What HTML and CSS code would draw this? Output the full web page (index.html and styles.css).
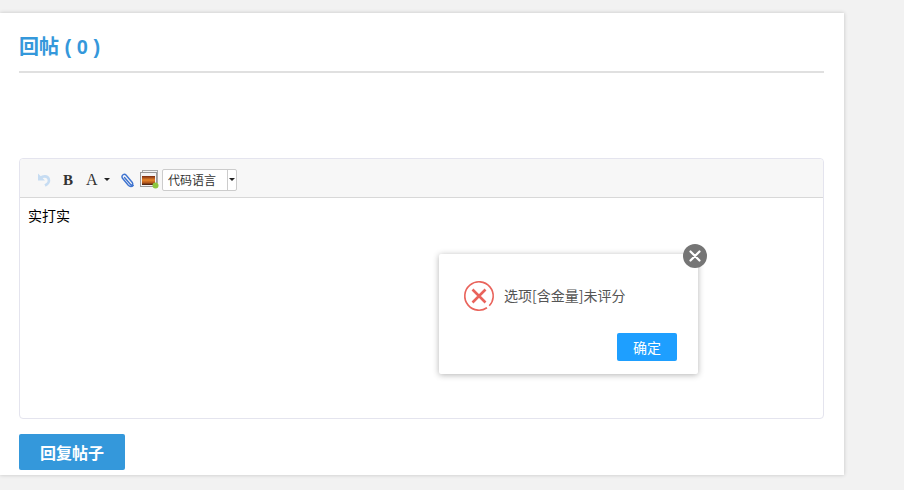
FILE: index.html
```html
<!DOCTYPE html>
<html lang="zh-CN">
<head>
<meta charset="utf-8">
<title>回帖</title>
<link rel="stylesheet" href="styles.css">
</head>
<body>
<main class="card">
  <h2 class="title">回帖 ( 0 )</h2>
  <section class="editor">
    <div class="toolbar">
      <svg class="ic ic-undo" width="16" height="16" viewBox="0 0 16 16"><path d="M2 1.500v7h7z" fill="#c6dcf2"/><path d="M4.500 6c2.500-2.300 7-2.300 8.200 1 .8 2.500-.8 5-3.700 6.500" fill="none" stroke="#c6dcf2" stroke-width="2.600"/></svg>
      <span class="glyph glyph-b">B</span>
      <span class="glyph glyph-a">A</span>
      <span class="caret"></span>
      <svg class="ic ic-clip" width="16" height="16" viewBox="0 0 16 16"><path d="M5.500 5.500l6 7c1.300 1.500 3-.4 1.800-2L7 3C5.300 1 2 3.400 3.300 6l6 7.300c1.400 1.600 3.700 1.700 5 0" fill="none" stroke="#3f74d0" stroke-width="1.400" stroke-linecap="round"/></svg>
      <svg class="ic ic-img" width="19" height="19" viewBox="0 0 19 19"><defs><linearGradient id="pic" x1="0" y1="0" x2="0" y2="1"><stop offset="0" stop-color="#7a2a10"/><stop offset=".45" stop-color="#e8862a"/><stop offset=".75" stop-color="#b3561c"/><stop offset="1" stop-color="#3a1a10"/></linearGradient></defs><rect x="2.500" y=".5" width="15" height="12" fill="#f4f4f4" stroke="#aaa"/><rect x=".5" y="2.500" width="16" height="14" fill="#f4f4f4" stroke="#999"/><rect x="2" y="6" width="13" height="9" fill="url(#pic)"/><circle cx="15.500" cy="15.500" r="3" fill="#8cc63f"/></svg>
      <div class="select"><span class="select-label">代码语言</span><span class="select-arrow"><span class="caret"></span></span></div>
    </div>
    <div class="content">实打实</div>
  </section>
  <button class="submit" type="button">回复帖子</button>
</main>
<div class="dialog">
  <button class="dialog-close" type="button" aria-label="关闭"><svg width="24" height="24" viewBox="0 0 24 24"><path d="M7.500 7.500l9 9M16.500 7.500l-9 9" stroke="#fff" stroke-width="2.200" stroke-linecap="round"/></svg></button>
  <div class="dialog-body">
    <svg class="dialog-icon" width="32" height="32" viewBox="0 0 32 32"><circle cx="16" cy="16" r="14.200" fill="none" stroke="#e9635b" stroke-width="1.600" stroke-dasharray="76 3" transform="rotate(95 16 16)"/><path d="M9.500 9.500l13 13M22.500 9.500l-13 13" stroke="#e9635b" stroke-width="2.600"/></svg>
    <span class="dialog-msg">选项[含金量]未评分</span>
  </div>
  <div class="dialog-foot"><button class="dialog-ok" type="button">确定</button></div>
</div>
</body>
</html>
```
FILE: styles.css
```css
* { box-sizing: border-box; }
html, body { margin: 0; height: 490px; overflow: hidden; }
body {
  background: #f2f2f2;
  font-family: "Noto Sans CJK SC", "Liberation Sans", sans-serif;
  position: relative;
}
.card {
  width: 844px;
  height: 462px;
  margin-top: 13px;
  padding: 0 20px 0 19px;
  background: #fff;
  box-shadow: 0 0 4px rgba(0, 0, 0, .2);
  display: flex;
  flex-direction: column;
  align-items: flex-start;
}
.title {
  width: 100%;
  height: 60px;
  margin: 0 0 85px;
  padding-top: 19px;
  border-bottom: 2px solid #e0e0e0;
  color: #3498db;
  font-size: 20px;
  line-height: 30px;
  font-weight: 700;
  font-family: "Liberation Sans", "Noto Sans CJK SC", sans-serif;
}
.editor {
  width: 100%;
  height: 261px;
  border: 1px solid #e4e4ee;
  border-radius: 4px;
  background: #fff;
}
.toolbar {
  height: 39px;
  background: #f7f7f7;
  border-bottom: 1px solid #d8d8d8;
  border-radius: 4px 4px 0 0;
  display: flex;
  align-items: center;
  padding: 3px 0 0 16px;
}
.ic { display: block; flex: none; }
.ic-undo { margin-right: 11px; }
.glyph {
  font-family: "Liberation Serif", serif;
  color: #333;
  line-height: 16px;
}
.glyph-b { font-size: 15px; font-weight: 700; width: 11px; margin-right: 12px; }
.glyph-a { font-size: 16px; width: 12px; margin-right: 6px; }
.caret {
  display: block;
  width: 0;
  height: 0;
  border-left: 3px solid transparent;
  border-right: 3px solid transparent;
  border-top: 3px solid #222;
}
.toolbar > .caret { margin-right: 9px; }
.ic-clip { margin-right: 5px; }
.ic-img { margin-right: 3px; }
.select {
  width: 75px;
  height: 22px;
  background: #fff;
  border: 1px solid #ccc;
  border-radius: 2px;
  display: flex;
  font-size: 12px;
  line-height: 20px;
  color: #333;
}
.select-label { width: 65px; padding-left: 5px; border-right: 1px solid #ccc; }
.select-arrow { flex: 1; display: flex; align-items: center; justify-content: center; }
.content {
  padding: 7px 8px;
  font-size: 14px;
  line-height: 21px;
  color: #000;
}
.submit {
  margin-top: 15px;
  width: 106px;
  height: 36px;
  padding: 0;
  border: 0;
  border-radius: 2px;
  background: #3498db;
  color: #fff;
  font: 700 16px/35px "Noto Sans CJK SC", sans-serif;
}
.dialog {
  position: absolute;
  left: 439px;
  top: 254px;
  width: 259px;
  height: 120px;
  background: #fff;
  border-radius: 2px;
  box-shadow: 0 1px 6px rgba(0, 0, 0, .3);
}
.dialog-close {
  position: absolute;
  right: -9px;
  top: -10px;
  width: 24px;
  height: 24px;
  padding: 0;
  border: 0;
  border-radius: 50%;
  background: #757575;
}
.dialog-close svg { display: block; }
.dialog-body {
  height: 79px;
  padding: 26px 0 0 24px;
  display: flex;
  align-items: flex-start;
}
.dialog-icon { flex: none; margin-right: 9px; }
.dialog-msg { font-size: 14px; line-height: 31px; color: #555; }
.dialog-foot { display: flex; justify-content: flex-end; padding-right: 21px; }
.dialog-ok {
  width: 60px;
  height: 28px;
  padding: 0;
  border: 0;
  border-radius: 2px;
  background: #1e9fff;
  color: #fff;
  font: 14px/28px "Noto Sans CJK SC", sans-serif;
}
```
